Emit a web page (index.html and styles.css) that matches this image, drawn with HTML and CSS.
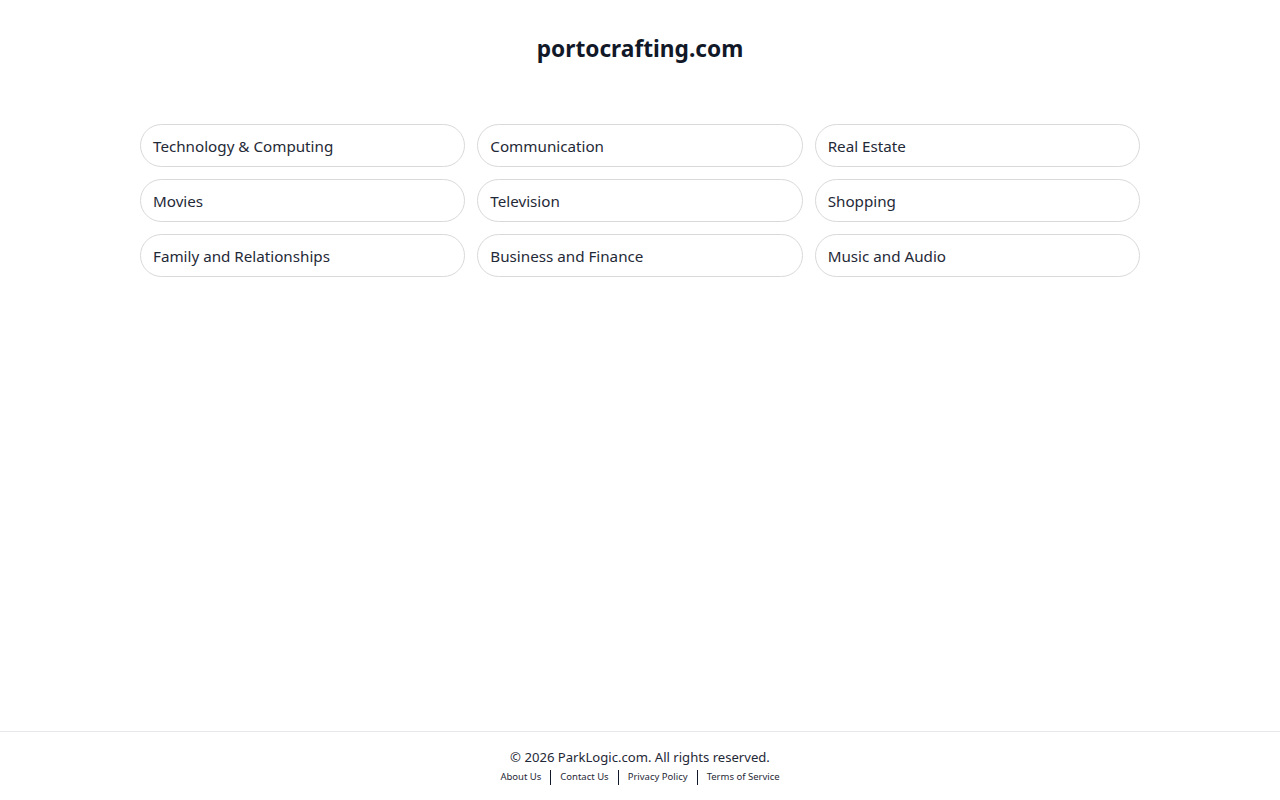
FILE: index.html
```html
<!DOCTYPE html>
<html lang="en">
  <head>
    <meta charset="UTF-8" />
    <meta name="viewport" content="width=device-width, initial-scale=1.0" />
    <title>portocrafting.com</title>
    <link rel="stylesheet" href="styles.css">
  </head>
  <body>
    <div class="page">
      <main class="container">
        <h1>portocrafting.com</h1>

        <div class="links">
          <a class="link-pill" href="#">Technology &amp; Computing</a>
          <a class="link-pill" href="#">Communication</a>
          <a class="link-pill" href="#">Real Estate</a>
          <a class="link-pill" href="#">Movies</a>
          <a class="link-pill" href="#">Television</a>
          <a class="link-pill" href="#">Shopping</a>
          <a class="link-pill" href="#">Family and Relationships</a>
          <a class="link-pill" href="#">Business and Finance</a>
          <a class="link-pill" href="#">Music and Audio</a>
        </div>
      </main>

      <footer class="footer">
        <p class="copyright">&copy; 2026 ParkLogic.com. All rights reserved.</p>
        <nav class="footer-nav">
          <a href="#">About Us</a>
          <span class="sep"></span>
          <a href="#">Contact Us</a>
          <span class="sep"></span>
          <a href="#">Privacy Policy</a>
          <span class="sep"></span>
          <a href="#">Terms of Service</a>
        </nav>
      </footer>
    </div>
  </body>
</html>
```

FILE: styles.css
```css
* {
  margin: 0;
  padding: 0;
  box-sizing: border-box;
  font-family: "Segoe UI", "Noto Sans", "Open Sans", sans-serif;
}

body {
  background-color: #fff;
  color: #111827;
}

a {
  color: inherit;
  text-decoration: none;
}

.page {
  min-height: 100vh;
  display: flex;
  flex-direction: column;
}

.container {
  flex: 1;
  width: 1000px;
  margin: 0 auto;
  padding-top: 32px;
}

h1 {
  text-align: center;
  font-size: 22.7px;
  font-weight: 700;
  line-height: 34px;
  margin-bottom: 58px;
  color: #111827;
}

.links {
  display: grid;
  grid-template-columns: repeat(3, 1fr);
  gap: 12px;
}

.link-pill {
  display: block;
  height: 43px;
  padding: 1px 12px 0;
  border: 1px solid #d9d9d9;
  border-radius: 22px;
  font-size: 15.2px;
  line-height: 41px;
  color: #1f2937;
}

.footer {
  border-top: 1px solid #e5e7eb;
  padding: 15px 0;
  text-align: center;
}

.copyright {
  font-size: 13.1px;
  line-height: 20px;
  margin-bottom: 2px;
  color: #1f2937;
}

.footer-nav {
  display: flex;
  justify-content: center;
  align-items: center;
  gap: 9px;
  font-size: 9.5px;
  line-height: 16px;
  color: #1f2937;
}

.sep {
  width: 1px;
  height: 15px;
  background-color: #111827;
}
```
